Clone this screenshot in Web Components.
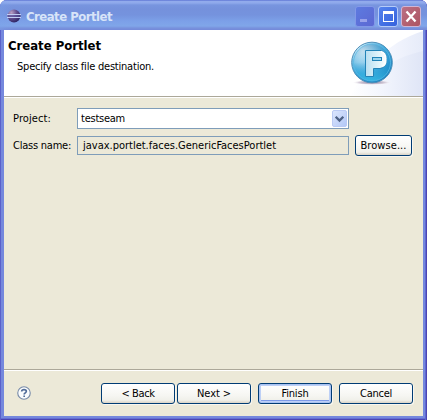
<!DOCTYPE html>
<html lang="en"><head><meta charset="utf-8"><title>Create Portlet</title>
<style>html,body{margin:0;width:427px;height:420px;overflow:hidden;background:#fff}</style></head>
<body><portlet-wizard></portlet-wizard>
<script>
function define(name, html, setup) {
  const t = document.createElement('template');
  t.innerHTML = html;
  customElements.define(name, class extends HTMLElement {
    connectedCallback() {
      if (this.shadowRoot) return;
      this.attachShadow({mode: 'open'}).append(t.content.cloneNode(true));
      if (setup) setup(this, this.shadowRoot);
    }
  });
}

// A single line of text tracked to a given width.
define('ui-text', `<style>
:host{display:block;white-space:nowrap;line-height:14px;height:14px;padding-top:1px}
span{display:inline-block}
</style><span><slot></slot></span>`, (el, root) => {
  const w = +el.getAttribute('w'), s = root.querySelector('span');
  el.style.width = w + 'px';
  const n = el.textContent.length;
  s.style.letterSpacing = ((w - s.getBoundingClientRect().width) / n) + 'px';
});

define('push-button', `<style>
:host{display:flex;box-sizing:border-box;height:21px;width:74px;flex:none;border:1px solid #003c74;border-radius:3px;
justify-content:center;align-items:center;background:linear-gradient(#fff,#f6f6f2 60%,#f0f0ea 85%,#d9d3c6);box-shadow:1px 1px 0 #f8f6ef}
:host([wide]){width:57px}
:host([default]){box-shadow:inset 0 0 0 1px #a9c3f2,inset 0 0 0 2px #bdd0f6,inset 0 -2px 0 1px #7d9be8,1px 1px 0 #f8f6ef}
</style><slot></slot>`);

define('caption-button', `<style>
:host{display:block;width:20px;height:21px;flex:none}svg{display:block}
</style><svg width="20" height="21" viewBox="0 0 20 21"><defs>
<linearGradient id="g" x1="0" y1="0" x2="1" y2="1"><stop offset="0"/><stop offset="1"/></linearGradient></defs>
<rect x=".5" y=".5" width="19" height="20" rx="2.500" fill="url(#g)"/><g></g></svg>`, (el, root) => {
  const kinds = {
    min: ['#5d7be0', '#5c67d2', '#8298e8', '<path d="M5 13h7v3h-7z" fill="#98a2ea"/>'],
    max: ['#5684ee', '#3461dc', '#b5cbf8', '<path d="M5 5h11v11H5zM6 8v7h9V8z" fill="#fff" fill-rule="evenodd"/>'],
    close: ['#bb7185', '#ad5360', '#cfb5d4', '<path d="M5.500 5.500l9 10M14.500 5.500l-9 10" stroke="#fff" stroke-width="2.300"/>']
  };
  const [a, b, edge, glyph] = kinds[el.getAttribute('kind')];
  const s = root.querySelectorAll('stop');
  s[0].setAttribute('stop-color', a); s[1].setAttribute('stop-color', b);
  root.querySelector('g').innerHTML = glyph;
  root.querySelector('rect').setAttribute('stroke', edge);
});

define('title-bar', `<style>
:host{display:flex;box-sizing:border-box;height:30px;padding:6px 6px 0 7px;
background:linear-gradient(90deg,#7aa2ea66 0,#7aa2ea00 12px),linear-gradient(#5e75d4 0,#92abec 1.500px,#8fa9eb 3px,#7895df 5px,#7591dc 9px,#7593de 15px,#7ca0e8 21px,#80a6e9 26px,#7892dd 28px,#7489d9 30px)}
.icon{margin-top:3px;width:14px;height:14px;flex:none}
ui-text{margin:3px auto 0 5px;font:bold 13px/14px "Trebuchet MS","DejaVu Sans Condensed","DejaVu Sans",sans-serif;color:#d8e4f8}
caption-button+caption-button{margin-left:3px}
</style>
<svg class="icon" viewBox="0 0 14 14"><defs><radialGradient id="e" cx=".3" cy=".25" r=".8"><stop offset="0" stop-color="#b8a0c4"/><stop offset=".5" stop-color="#65508f"/><stop offset="1" stop-color="#2c2464"/></radialGradient></defs>
<circle cx="7" cy="7" r="6.500" fill="url(#e)"/><path d="M0 5.500h14M0 8.500h14" stroke="#c2cdf4" stroke-width="1"/><path d="M1 7h12" stroke="#53509c"/></svg>
<ui-text w="86">Create Portlet</ui-text>
<caption-button kind="min"></caption-button><caption-button kind="max"></caption-button><caption-button kind="close"></caption-button>`);

define('wizard-header', `<style>
:host{display:flex;box-sizing:border-box;height:68px;background:#fff;border-bottom:1px solid #fff;box-shadow:inset 0 -1px #aca899}
.copy{padding:8px 0 0 4px;flex:1}
h1{margin:0;font:bold 13px "DejaVu Sans Condensed","DejaVu Sans",sans-serif}
.sub{margin:6px 0 0 9px}
svg{display:block;flex:none;height:66px}
</style><div class="copy"><h1><ui-text w="93">Create Portlet</ui-text></h1><ui-text class="sub" w="137">Specify class file destination.</ui-text></div>
<svg width="83" height="66" viewBox="340 30 83 66"><defs>
<linearGradient id="w" x1="0" x2="1"><stop offset="0" stop-color="#fff"/><stop offset=".5" stop-color="#f5f7fe"/><stop offset="1" stop-color="#e6ebf9"/></linearGradient>
<linearGradient id="v" x1="0" x2="1"><stop offset="0" stop-color="#fff"/><stop offset=".45" stop-color="#f2f5fd"/><stop offset="1" stop-color="#dfe5f6"/></linearGradient>
<radialGradient id="b" cx=".28" cy=".22" r=".85"><stop offset="0" stop-color="#e9f7fd"/><stop offset=".3" stop-color="#9dd3ee"/><stop offset=".65" stop-color="#3ba7db"/><stop offset="1" stop-color="#1681c0"/></radialGradient>
<linearGradient id="l" x2="0" y2="1"><stop offset="0" stop-color="#18649e" stop-opacity=".3"/><stop offset=".5" stop-color="#1c8ecb" stop-opacity="0"/><stop offset="1" stop-color="#43d5f5" stop-opacity=".6"/></linearGradient>
<linearGradient id="p" x1="0" y1="0" x2="1" y2="0"><stop offset="0" stop-color="#b9dff1"/><stop offset=".65" stop-color="#e3f5fb"/><stop offset="1" stop-color="#fff"/></linearGradient>
<radialGradient id="s"><stop offset="0" stop-color="#8e82a4"/><stop offset=".65" stop-color="#d5cdda"/><stop offset="1" stop-color="#fff" stop-opacity="0"/></radialGradient></defs>
<path d="M350 96C365 70 385 43 423 31V96z" fill="url(#w)"/><path d="M350 96C370 77 390 58 423 51V96z" fill="url(#v)"/>
<ellipse cx="372" cy="82.500" rx="20" ry="2.500" fill="url(#s)"/>
<circle cx="372" cy="62.500" r="20.300" fill="url(#b)" stroke="#4d8fb9" stroke-width="1"/>
<circle cx="372" cy="62.500" r="18.500" fill="url(#l)" stroke="#5bb9e3" stroke-width=".8"/>
<path d="M365.500 50.500H381Q386.500 52.500 386.500 58.500V60Q386.500 67.500 380 68.500H373.500V76.500H365.500z" fill="url(#p)" stroke="#2383b7" stroke-width="1"/>
<rect x="372.500" y="57.500" width="9" height="3" fill="#9bd5ee" stroke="#2383b7"/>
<path d="M381 51.500Q385.700 53 385.700 58.500V60.500Q385.700 65 382.500 66" fill="none" stroke="#fff" stroke-width="1.800"/></svg>`);

define('drop-field', `<style>
:host{display:flex;box-sizing:border-box;width:272px;height:21px;border:1px solid #7f9db9;background:#fff;align-items:center;padding:0 1px 0 3px;justify-content:space-between}
svg{display:block}
</style><slot></slot><svg width="15" height="17" viewBox="0 0 15 17"><defs><linearGradient id="d" x1="0" y1="0" x2="1" y2="1"><stop offset="0" stop-color="#dce6fd"/><stop offset="1" stop-color="#b2c7f6"/></linearGradient></defs><rect x=".5" y=".5" width="14" height="16" rx="1.500" fill="url(#d)" stroke="#bacaf4"/><path d="M3.700 6.700L7.500 10.500l3.800-3.800" fill="none" stroke="#4d6185" stroke-width="2.300"/></svg>`);

define('read-field', `<style>
:host{display:flex;box-sizing:border-box;width:272px;height:19px;border:1px solid #7f9db9;align-items:center;padding-left:5px}
</style><slot></slot>`);

define('form-grid', `<style>
:host{display:grid;box-sizing:border-box;flex:1;grid-template-columns:64px 272px 57px;column-gap:0;grid-template-rows:21px 21px;row-gap:6px;align-items:center;align-content:start;padding:10px 0 0 9px}
push-button{margin-left:6px}
</style>
<ui-text w="38">Project:</ui-text><drop-field><ui-text w="44">testseam</ui-text></drop-field><i></i>
<ui-text w="58">Class name:</ui-text><read-field><ui-text w="193">javax.portlet.faces.GenericFacesPortlet</ui-text></read-field><push-button wide><ui-text w="46">Browse...</ui-text></push-button>`);

define('wizard-footer', `<style>
:host{display:flex;box-sizing:border-box;height:47px;border-top:1px solid #aca899;box-shadow:inset 0 1px #fff;padding:13px 10px 0 13px;align-items:flex-start}
.help{margin:3px auto 0 0;width:14px;height:14px;flex:none}
.n{margin-left:2px}.f,.c{margin-left:7px}
</style>
<svg class="help" viewBox="0 0 15 15"><circle cx="7.500" cy="7.500" r="6.700" fill="#fafcfd" stroke="#788ba8" stroke-width="1.200"/><path d="M5 5.900Q5 3.900 7.500 3.900T10 5.700Q10 6.700 8.700 7.400Q7.700 7.900 7.700 9.100M7.700 10.200V11.900" fill="none" stroke="#526d99" stroke-width="1.800"/></svg>
<push-button><ui-text w="33">&lt; Back</ui-text></push-button><push-button class="n"><ui-text w="34">Next &gt;</ui-text></push-button><push-button class="f" default><ui-text w="27">Finish</ui-text></push-button><push-button class="c"><ui-text w="32">Cancel</ui-text></push-button>`);

define('portlet-wizard', `<style>
:host{display:flex;flex-direction:column;box-sizing:border-box;width:427px;height:420px;border-radius:7px 7px 0 0;overflow:hidden;
font:11px/14px "DejaVu Sans Condensed","DejaVu Sans",sans-serif;color:#000;background:#7588dd;box-shadow:inset 1px 0 #5b61ca,inset -1px 0 #4b45b2,inset -2px 0 #5d68d0,inset 0 -1px #4b45b2,inset 0 -2px #6470d4}
.body{display:flex;flex-direction:column;margin:0 4px 4px;flex:1;background:#ece9d8}
</style><title-bar></title-bar><div class="body"><wizard-header></wizard-header><form-grid></form-grid><wizard-footer></wizard-footer></div>`);
</script></body></html>
